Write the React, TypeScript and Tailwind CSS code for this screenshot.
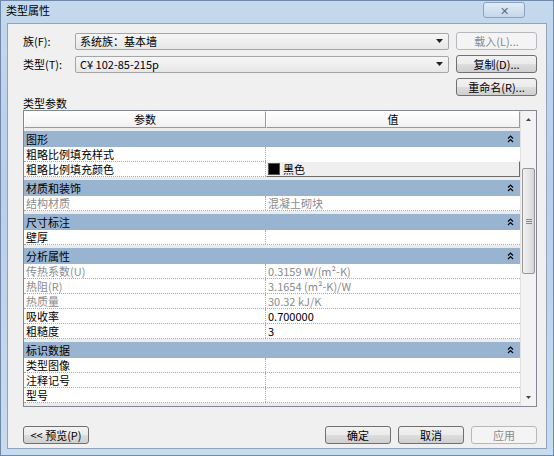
import type { ReactNode } from 'react';

type Param = { name: string; value?: ReactNode; gray?: boolean };

const groups: { title: string; rows: Param[] }[] = [
  {
    title: '图形',
    rows: [{ name: '粗略比例填充样式' }, { name: '粗略比例填充颜色', value: 'swatch' }],
  },
  { title: '材质和装饰', rows: [{ name: '结构材质', value: '混凝土砌块', gray: true }] },
  { title: '尺寸标注', rows: [{ name: '壁厚' }] },
  {
    title: '分析属性',
    rows: [
      { name: '传热系数(U)', value: '0.3159 W/(m²-K)', gray: true },
      { name: '热阻(R)', value: '3.1654 (m²-K)/W', gray: true },
      { name: '热质量', value: '30.32 kJ/K', gray: true },
      { name: '吸收率', value: '0.700000' },
      { name: '粗糙度', value: '3' },
    ],
  },
  { title: '标识数据', rows: [{ name: '类型图像' }, { name: '注释记号' }, { name: '型号' }] },
];

function Collapse() {
  return (
    <svg width="7" height="8" viewBox="0 0 7 8" className="text-black">
      <path d="M1 3.5 L3.5 1 L6 3.5 M1 7 L3.5 4.5 L6 7" fill="none" stroke="currentColor" strokeWidth="1.2" />
    </svg>
  );
}

function Combo({ text }: { text: string }) {
  return (
    <div className="w-[374px] h-[17px] flex items-center justify-between rounded-[2px] border border-[#a6a6a6] bg-[linear-gradient(#f6f6f6,#e7e7e7)] pl-[4px] pr-[5px]">
      <span className="text-[11px] leading-none text-black">{text}</span>
      <svg width="7" height="4" viewBox="0 0 7 4">
        <path d="M0 0 H7 L3.5 4 Z" fill="#222" />
      </svg>
    </div>
  );
}

function Btn({ children, disabled, w = 'w-[81px]' }: { children: ReactNode; disabled?: boolean; w?: string }) {
  return (
    <div
      className={
        w +
        ' h-[18px] flex items-center justify-center rounded-[3px] border text-[11px] leading-none ' +
        (disabled
          ? 'border-[#b5b9bd] bg-[#f4f4f4] text-[#8a8a8a]'
          : 'border-[#707070] bg-[linear-gradient(#f2f2f2_0%,#ebebeb_50%,#dddddd_51%,#cfcfcf_100%)] text-black')
      }
    >
      {children}
    </div>
  );
}

function Row({ p }: { p: Param }) {
  const tone = p.gray ? 'text-[#8c8c8c]' : 'text-black';
  return (
    <div className="flex h-[15px] bg-white border-b border-dotted border-[#a8a8a8]">
      <div className={'w-[242px] shrink-0 border-r border-dotted border-[#a8a8a8] pl-[2px] text-[11px] leading-[14px] ' + tone}>
        {p.name}
      </div>
      {p.value === 'swatch' ? (
        <div className="flex-1 -mt-[1px] h-[16px] flex items-center gap-[3px] pl-[1px] bg-[#efefef] border border-[#fff] border-r-[#6d6d6d] border-b-[#6d6d6d]">
          <div className="w-[12px] h-[12px] bg-black border border-[#555]" />
          <span className="text-[11px] leading-none text-black">黑色</span>
        </div>
      ) : (
        <div className={'flex-1 pl-[2px] text-[11px] leading-[14px] ' + tone}>{p.value}</div>
      )}
    </div>
  );
}

function Scrollbar() {
  return (
    <div className="w-[16px] shrink-0 flex flex-col bg-[#f3f3f3] border-l border-[#e2e2e2]">
      <div className="h-[17px] flex items-center justify-center">
        <svg width="5" height="3" viewBox="0 0 5 3">
          <path d="M0 3 L2.5 0 L5 3 Z" fill="#444" />
        </svg>
      </div>
      <div className="h-[40px]" />
      <div className="h-[106px] mx-[1px] rounded-[2px] border border-[#979797] bg-[linear-gradient(90deg,#f1f1f1,#e3e3e3_60%,#d4d4d4)] flex items-center justify-center">
        <div className="flex flex-col gap-[1px]">
          <div className="w-[6px] h-[1px] bg-[#888]" />
          <div className="w-[6px] h-[1px] bg-[#888]" />
          <div className="w-[6px] h-[1px] bg-[#888]" />
        </div>
      </div>
      <div className="flex-1" />
      <div className="h-[17px] flex items-center justify-center">
        <svg width="5" height="3" viewBox="0 0 5 3">
          <path d="M0 0 L5 0 L2.5 3 Z" fill="#444" />
        </svg>
      </div>
    </div>
  );
}

export default function App() {
  return (
    <div className="w-[554px] h-[456px] flex flex-col bg-[linear-gradient(180deg,#c4d8ee,#b9cfe8_40%,#c8dbef)] border border-[#6f8aa8] font-['Noto_Sans_CJK_SC',sans-serif] overflow-hidden">
      {/* Title bar */}
      <div className="h-[22px] shrink-0 flex items-start justify-between pl-[5px] pr-[28px]">
        <span className="mt-[4px] text-[11px] leading-none text-black">类型属性</span>
        <div className="mt-[1px] w-[42px] h-[16px] flex items-center justify-center rounded-[3px] border border-[#8aa2bf] bg-[linear-gradient(#e2ecf7,#c5d6ea)]">
          <span className="text-[11px] leading-none text-[#5b6f86]">✕</span>
        </div>
      </div>

      {/* Client */}
      <div className="mx-[6px] mb-[6px] flex-1 flex flex-col bg-[#f0f0f0] border border-[#8fa3bd]">
        <div className="flex flex-col gap-[5px] pt-[8px] pr-[9px]">
          <div className="flex items-center">
            <span className="w-[52px] pl-[15px] box-content text-[11px] leading-none">族(F):</span>
            <Combo text="系统族：基本墙" />
            <div className="ml-auto">
              <Btn disabled>载入(L)...</Btn>
            </div>
          </div>
          <div className="flex items-center">
            <span className="w-[52px] pl-[15px] box-content text-[11px] leading-none">类型(T):</span>
            <Combo text="C¥ 102-85-215p" />
            <div className="ml-auto">
              <Btn>复制(D)...</Btn>
            </div>
          </div>
          <div className="flex justify-end">
            <Btn>重命名(R)...</Btn>
          </div>
        </div>

        <div className="pl-[15px] pt-[1px] text-[11px] leading-[12px]">类型参数</div>

        {/* Grid */}
        <div className="ml-[15px] mr-[9px] mt-[1px] h-[297px] flex border border-[#828790] bg-[#ececec] overflow-hidden">
          <div className="flex-1 flex flex-col overflow-hidden">
            <div className="h-[17px] shrink-0 flex bg-[linear-gradient(#ffffff,#f1f1f1)] text-[11px] leading-none">
              <div className="w-[242px] flex items-center justify-center border border-[#fff] border-r-[#9a9a9a] border-b-[#9a9a9a]">参数</div>
              <div className="flex-1 flex items-center justify-center border border-[#fff] border-r-[#9a9a9a] border-b-[#9a9a9a]">值</div>
            </div>
            {groups.map((g) => (
              <div key={g.title} className="pt-[3px] shrink-0">
                <div className="h-[16px] flex items-center justify-between bg-[#99b4d1] pl-[2px] pr-[6px]">
                  <span className="text-[11px] leading-none text-black">{g.title}</span>
                  <Collapse />
                </div>
                {g.rows.map((r) => (
                  <Row key={r.name} p={r} />
                ))}
              </div>
            ))}
          </div>
          <Scrollbar />
        </div>

        {/* Footer */}
        <div className="flex items-center mt-[19px] pl-[15px] pr-[9px]">
          <Btn w="w-[66px]">&lt;&lt; 预览(P)</Btn>
          <div className="ml-auto flex gap-[7px]">
            <Btn w="w-[66px]">确定</Btn>
            <Btn w="w-[66px]">取消</Btn>
            <Btn w="w-[66px]" disabled>
              应用
            </Btn>
          </div>
        </div>
      </div>
    </div>
  );
}
